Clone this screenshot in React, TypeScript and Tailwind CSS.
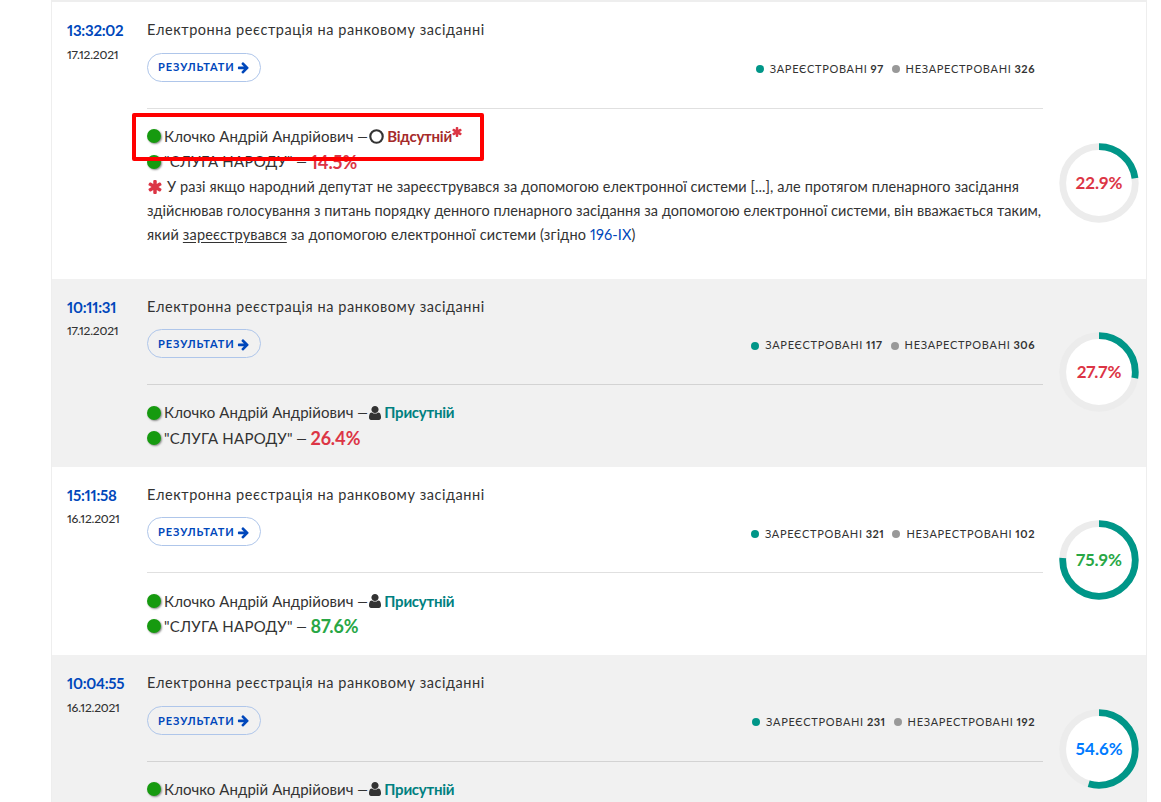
import clsx from "clsx";

interface Registration {
  time: string;
  date: string;
  registered: number;
  unregistered: number;
  present: boolean;
  faction: string;
  factionColor: string;
  total: number;
  totalColor: string;
}

const registrations: Registration[] = [
  {
    time: "13:32:02",
    date: "17.12.2021",
    registered: 97,
    unregistered: 326,
    present: false,
    faction: "14.5%",
    factionColor: "text-[#dc3545]",
    total: 22.9,
    totalColor: "text-[#dc3545]",
  },
  {
    time: "10:11:31",
    date: "17.12.2021",
    registered: 117,
    unregistered: 306,
    present: true,
    faction: "26.4%",
    factionColor: "text-[#dc3545]",
    total: 27.7,
    totalColor: "text-[#dc3545]",
  },
  {
    time: "15:11:58",
    date: "16.12.2021",
    registered: 321,
    unregistered: 102,
    present: true,
    faction: "87.6%",
    factionColor: "text-[#28a745]",
    total: 75.9,
    totalColor: "text-[#28a745]",
  },
  {
    time: "10:04:55",
    date: "16.12.2021",
    registered: 231,
    unregistered: 192,
    present: true,
    faction: "",
    factionColor: "text-[#007bff]",
    total: 54.6,
    totalColor: "text-[#007bff]",
  },
];

function ArrowIcon() {
  return (
    <svg viewBox="0 0 1792 1792" className="size-[13px]" fill="currentColor">
      <path d="M1600 960q0 54-37 91l-651 651q-39 37-91 37-51 0-90-37l-75-75q-38-38-38-91t38-91l293-293h-704q-52 0-84.5-37.5t-32.5-90.5v-128q0-53 32.5-90.5t84.5-37.5h704l-293-294q-38-36-38-90t38-90l75-75q38-38 90-38 53 0 91 38l651 651q37 35 37 90z" />
    </svg>
  );
}

function UserIcon() {
  return (
    <svg viewBox="256 128 1280 1536" className="h-[14px] w-[12px]" preserveAspectRatio="none" fill="currentColor">
      <path d="M1536 1399q0 109-62.5 187t-150.5 78h-854q-88 0-150.5-78t-62.5-187q0-85 8.5-160.5t31.5-152 58.5-131 94-89 134.5-34.5q131 128 313 128t313-128q76 0 134.5 34.5t94 89 58.5 131 31.5 152 8.5 160.5zm-256-887q0 159-112.5 271.5t-271.5 112.5-271.5-112.5-112.5-271.5 112.5-271.5 271.5-112.5 271.5 112.5 112.5 271.5z" />
    </svg>
  );
}

function AsteriskIcon({ className }: { className: string }) {
  return (
    <svg viewBox="180 128 1432 1536" className={clsx("shrink-0", className)} fill="currentColor">
      <path d="M1546 1050q46 26 59.5 77.5t-12.5 97.5l-64 110q-26 46-77.5 59.5t-97.5-12.5l-266-153v307q0 52-38 90t-90 38h-128q-52 0-90-38t-38-90v-307l-266 153q-46 26-97.5 12.5t-77.5-59.5l-64-110q-26-46-12.5-97.5t59.5-77.5l266-154-266-154q-46-26-59.5-77.5t12.5-97.5l64-110q26-46 77.5-59.5t97.5 12.5l266 153v-307q0-52 38-90t90-38h128q52 0 90 38t38 90v307l266-153q46-26 97.5-12.5t77.5 59.5l64 110q26 46 12.5 97.5t-59.5 77.5l-266 154z" />
    </svg>
  );
}

function CircleIcon() {
  return (
    <svg viewBox="0 0 14 14" className="size-[15px]" fill="none" stroke="currentColor">
      <circle cx="7" cy="7" r="5.8" strokeWidth="2" />
    </svg>
  );
}

function FactionDot() {
  return <span className="mr-[3px] size-[14px] shrink-0 rounded-full bg-[#169a0f] shadow-[1px_1px_2px_#888]" />;
}

function Dash() {
  return <span className="ml-[2px] inline-block origin-left scale-x-150">–</span>;
}

function Donut({ value, color }: { value: number; color: string }) {
  return (
    <div className="grid size-20 place-items-center">
      <svg viewBox="0 0 80 80" className="col-start-1 row-start-1 size-20">
        <circle cx="40" cy="40" r="36.3" fill="#fff" stroke="#ececec" strokeWidth="6.8" />
        <circle
          cx="40"
          cy="40"
          r="36.3"
          fill="none"
          stroke="#009688"
          strokeWidth="6.8"
          pathLength="100"
          strokeDasharray={`${value} 100`}
          transform="rotate(-90 40 40)"
        />
      </svg>
      <span className={clsx("col-start-1 row-start-1 text-[17px] leading-5 font-bold", color)}>{value}%</span>
    </div>
  );
}

function Legend({ registered, unregistered }: { registered: number; unregistered: number }) {
  return (
    <div className="flex h-5 items-center pt-px text-[11px] tracking-[0.68px]">
      <span className="mr-1.5 size-2 rounded-full bg-[#009688]" />
      <span>ЗАРЕЄСТРОВАНІ</span>
      <b className="ml-[3px] tracking-[0.5px]">{registered}</b>
      <span className="mr-1.5 ml-2 size-2 rounded-full bg-[#999]" />
      <span>НЕЗАРЕСТРОВАНІ</span>
      <b className="ml-[3px] tracking-[0.5px]">{unregistered}</b>
    </div>
  );
}

function Footnote() {
  return (
    <div className="text-[14.5px] leading-6 tracking-[0.09px] whitespace-nowrap">
      <div className="flex items-center">
        <AsteriskIcon className="mr-[5px] ml-px size-[14px] text-[#dc3545]" />
        <span>
          У разі якщо народний депутат не зареєструвався за допомогою електронної системи [...], але протягом пленарного засідання
        </span>
      </div>
      <div className="tracking-[0.07px]">
        здійснював голосування з питань порядку денного пленарного засідання за допомогою електронної системи, він вважається таким,
      </div>
      <div className="tracking-[0.16px]">
        який <u className="underline-offset-2">зареєструвався</u> за допомогою електронної системи (згідно{" "}
        <a className="text-[#0047bb]">196-IX</a>)
      </div>
    </div>
  );
}

function RegistrationRow({ row, index }: { row: Registration; index: number }) {
  return (
    <section
      className={clsx(
        "relative flex shrink-0 pl-[15px]",
        index === 0 ? "h-[276.6px]" : "h-[188.3px]",
        index % 2 === 1 && "bg-[#f1f1f1]"
      )}
    >
      <div className="w-20 shrink-0 pt-[18px] whitespace-nowrap">
        <div className="text-[15px] leading-5 font-bold tracking-[-0.25px] text-[#0047bb]">{row.time}</div>
        <div className="pt-[4.6px] text-xs leading-5 font-medium tracking-[-0.2px]">{row.date}</div>
      </div>

      <div className="w-[896px] shrink-0 pt-[18px]">
        <h3 className="text-[14.5px] leading-5 tracking-[0.56px] whitespace-nowrap">
          Електронна реєстрація на ранковому засіданні
        </h3>
        <div className="flex h-[68.6px] items-start justify-between border-b border-black/12 pt-[12.6px] pr-2">
          <button className="flex h-[29px] w-[114px] items-center rounded-full border border-[#afc6ea] pt-px pl-2.5 text-[11px] font-bold tracking-[0.9px] text-[#0047bb]">
            <span className="mr-[2px]">РЕЗУЛЬТАТИ</span>
            <ArrowIcon />
          </button>
          <div className="pt-1.5">
            <Legend registered={row.registered} unregistered={row.unregistered} />
          </div>
        </div>

        <div className="pt-[15px] text-[15px] whitespace-nowrap">
          <div className="flex h-[25px] items-center">
            <FactionDot />
            <span className="tracking-[0.07px]">Клочко Андрій Андрійович</span>
            <Dash />
            <span className="mr-[3px] ml-[5px]">{row.present ? <UserIcon /> : <CircleIcon />}</span>
            <b className={clsx("tracking-[-0.25px]", row.present ? "text-[#008080]" : "text-[#a52a2a]")}>
              {row.present ? "Присутній" : "Відсутній"}
            </b>
            {!row.present && <AsteriskIcon className="mb-2 size-2.5 text-[#dc3545]" />}
          </div>
          {row.faction && (
            <div className="flex h-[26px] items-center">
              <FactionDot />
              <span className="tracking-[0.25px]">"СЛУГА НАРОДУ"</span>
              <Dash />
              <span className={clsx("ml-[7px] text-lg leading-5 font-bold tracking-[-0.1px]", row.factionColor)}>
                {row.faction}
              </span>
            </div>
          )}
          {!row.present && <Footnote />}
        </div>
      </div>

      <div className={clsx("ml-4", index === 0 ? "pt-[140.6px]" : "pt-[53.4px]")}>
        <Donut value={row.total} color={row.totalColor} />
      </div>

      {/* highlight around the absent deputy */}
      {!row.present && (
        <div className="absolute top-[111px] left-20 h-[48px] w-[352px] rounded-[2px] border-4 border-[#ff0000]" />
      )}
    </section>
  );
}

export default function App() {
  return (
    <main className="h-[802px] overflow-hidden bg-white pl-[51px] font-['Lato','Open_Sans',sans-serif] text-[#333] proportional-nums">
      <div className="flex h-[802px] w-[1096px] flex-col overflow-hidden border-x border-t-2 border-[#eee]">
        {registrations.map((row, index) => (
          <RegistrationRow key={row.time} row={row} index={index} />
        ))}
      </div>
    </main>
  );
}
